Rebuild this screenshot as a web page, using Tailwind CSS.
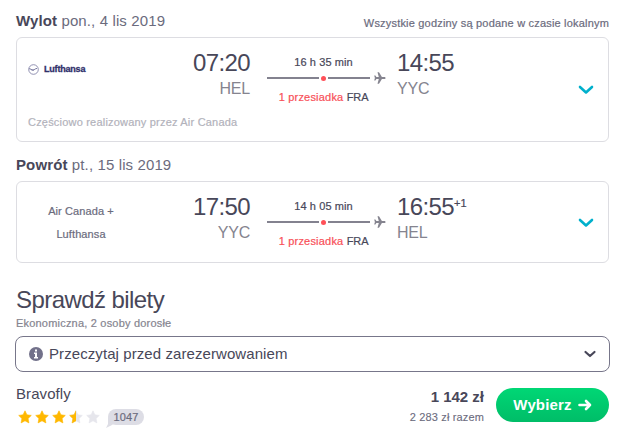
<!DOCTYPE html>
<html lang="pl">
<head>
    <meta charset="UTF-8">
    <meta name="viewport" content="width=device-width, initial-scale=1.0">
    <title>Sprawdź bilety</title>
    <script src="https://cdn.jsdelivr.net/npm/@tailwindcss/browser@4"></script>
</head>
<body class="bg-white font-['Liberation_Sans',Arial,sans-serif] text-[#484759] w-[632px] h-[437px] overflow-hidden">
    <svg class="hidden">
        <symbol id="plane" viewBox="0 0 12 12">
            <path d="M11.6 6c0-.7-.6-1.100-1.300-1.100H7.900L5 .3H3.500l1.300 4.600H2.400L1.400 3.600H.2L.9 6l-.7 2.400h1.200l1-1.300h2.400l-1.300 4.600H5l2.900-4.600h2.400c.7 0 1.300-.4 1.300-1.100z"/>
        </symbol>
        <symbol id="star" viewBox="0 0 14 14">
            <path d="M7 .8l1.9 4 4.4.6-3.2 3.1.8 4.4L7 10.8l-3.9 2.1.8-4.4L.7 5.4l4.4-.6z" stroke-width=".6" stroke-linejoin="round"/>
        </symbol>
    </svg>

    <main class="ml-4 w-[593px] pt-3">
        <!-- Outbound -->
        <div class="flex justify-between h-[18px]">
            <h2 class="text-[15px] leading-[18px] tracking-[0.12px] text-[#6b6b7d]"><b class="text-[#484759]">Wylot</b> pon., 4 lis 2019</h2>
            <p class="text-[11px] leading-[22px] tracking-[0.19px] text-[#6b6b7d] [-webkit-text-stroke:0.2px]">Wszystkie godziny są podane w czasie lokalnym</p>
        </div>
        <section class="mt-[7px] h-[105px] border border-[#dddde2] rounded-md flex">
            <div class="w-[163px] pl-[11px] pt-[23px]">
                <div class="flex items-center h-4 gap-[5px]">
                    <svg class="w-[11px] h-[11px]" viewBox="0 0 11 11" fill="none" stroke="#77779f">
                        <circle cx="5.5" cy="5.5" r="4.8" stroke-width=".8"/>
                        <path d="M1 4.7c2 .3 3 1.3 4.2 1.3S7 4.6 9 4.4M2.8 5.4c1.200.9 2.600 1.100 3.500.3" stroke-width="1"/>
                    </svg>
                    <span class="text-[9px] leading-4 font-bold tracking-[-0.2px] text-[#30306a] [-webkit-text-stroke:0.3px]">Lufthansa</span>
                </div>
                <p class="mt-[37px] text-[11px] leading-4 tracking-[0.2px] whitespace-nowrap text-[#b2b2bb] [-webkit-text-stroke:0.2px]">Częściowo realizowany przez Air Canada</p>
            </div>
            <div class="w-[70px] pt-[11px] text-right">
                <p class="text-2xl leading-7 tracking-[-0.6px]">07:20</p>
                <p class="text-base leading-6 tracking-[-0.2px] text-[#85848f]">HEL</p>
            </div>
            <div class="ml-[17px] w-[119px] pt-4">
                <p class="w-[113px] text-center text-[11px] leading-4 tracking-[0.08px] [-webkit-text-stroke:0.2px]">16 h 35 min</p>
                <div class="flex items-center h-4">
                    <i class="w-[52px] h-0.5 bg-[#83828f]"></i>
                    <i class="mx-0.5 size-[5px] rounded-full bg-[#ff5058]"></i>
                    <i class="w-[42px] h-0.5 bg-[#83828f]"></i>
                    <svg class="ml-1 size-3 fill-[#85848f]"><use href="#plane"/></svg>
                </div>
                <p class="mt-[3px] w-[113px] text-center text-[11px] leading-4 tracking-[0.2px] whitespace-nowrap [-webkit-text-stroke:0.2px]"><span class="text-[#f84f58]">1 przesiadka</span> <span class="tracking-[-0.1px]">FRA</span></p>
            </div>
            <div class="ml-[11px] pt-[11px]">
                <p class="text-2xl leading-7 tracking-[-0.6px]">14:55</p>
                <p class="text-base leading-6 tracking-[-0.2px] text-[#85848f]">YYC</p>
            </div>
            <svg class="ml-auto mr-[14px] self-center w-4 h-[10px]" viewBox="0 0 16 10" fill="none" stroke="#00b0cc" stroke-width="2.6" stroke-linecap="round" stroke-linejoin="round"><path d="M2 2l6 5.500 6-5.500"/></svg>
        </section>

        <!-- Return -->
        <h2 class="mt-[14px] text-[15px] leading-[18px] tracking-[0.12px] text-[#6b6b7d]"><b class="text-[#484759]">Powrót</b> pt., 15 lis 2019</h2>
        <section class="mt-[7px] h-[82px] border border-[#dddde2] rounded-md flex">
            <p class="w-[128px] mr-[35px] pt-[18px] text-center text-[11px] leading-[23px] tracking-[0.1px] text-[#6b6b7d] [-webkit-text-stroke:0.2px]">Air Canada +<br>Lufthansa</p>
            <div class="w-[70px] pt-[11px] text-right">
                <p class="text-2xl leading-7 tracking-[-0.6px]">17:50</p>
                <p class="text-base leading-6 tracking-[-0.2px] text-[#85848f]">YYC</p>
            </div>
            <div class="ml-[17px] w-[119px] pt-4">
                <p class="w-[113px] text-center text-[11px] leading-4 tracking-[0.08px] [-webkit-text-stroke:0.2px]">14 h 05 min</p>
                <div class="flex items-center h-4">
                    <i class="w-[52px] h-0.5 bg-[#83828f]"></i>
                    <i class="mx-0.5 size-[5px] rounded-full bg-[#ff5058]"></i>
                    <i class="w-[42px] h-0.5 bg-[#83828f]"></i>
                    <svg class="ml-1 size-3 fill-[#85848f]"><use href="#plane"/></svg>
                </div>
                <p class="mt-[3px] w-[113px] text-center text-[11px] leading-4 tracking-[0.2px] whitespace-nowrap [-webkit-text-stroke:0.2px]"><span class="text-[#f84f58]">1 przesiadka</span> <span class="tracking-[-0.1px]">FRA</span></p>
            </div>
            <div class="ml-[11px] pt-[11px]">
                <p class="flex text-2xl leading-7 tracking-[-0.6px]">16:55<span class="text-[11px] leading-5 tracking-normal [-webkit-text-stroke:0.2px]">+1</span></p>
                <p class="text-base leading-6 tracking-[-0.2px] text-[#85848f]">HEL</p>
            </div>
            <svg class="ml-auto mr-[14px] self-center w-4 h-[10px] mt-px" viewBox="0 0 16 10" fill="none" stroke="#00b0cc" stroke-width="2.6" stroke-linecap="round" stroke-linejoin="round"><path d="M2 2l6 5.500 6-5.500"/></svg>
        </section>

        <!-- Tickets -->
        <h1 class="mt-[23px] text-2xl leading-7 tracking-[-0.57px]">Sprawdź bilety</h1>
        <p class="mt-px text-[11px] leading-4 tracking-[0.2px] text-[#85848f] [-webkit-text-stroke:0.2px]">Ekonomiczna, 2 osoby dorosłe</p>
        <div class="mt-[5px] -mx-px h-9 border border-[#77768a] rounded-lg flex items-center pl-[13px] pr-[11px]">
            <svg class="size-[14px]" viewBox="0 0 14 14"><circle cx="7" cy="7" r="7" fill="#72718a"/><path d="M6 2.500h2v2H6zM5 5.600h3v4.400h1v1.400H5V10h1V7H5z" fill="#fff"/></svg>
            <span class="ml-[6px] text-[15px] leading-5 tracking-[0.08px]">Przeczytaj przed zarezerwowaniem</span>
            <svg class="ml-auto w-4 h-[10px]" viewBox="0 0 16 10" fill="none" stroke="#484759" stroke-width="2.200" stroke-linecap="round" stroke-linejoin="round"><path d="M3.500 3l4.500 4 4.500-4"/></svg>
        </div>
        <div class="mt-3 flex">
            <div>
                <p class="text-[15px] leading-5 tracking-[0.08px]">Bravofly</p>
                <div class="mt-1 flex items-center gap-[3px] pl-0.5 h-[18px]">
                    <svg class="size-[14px] fill-[#ffb800] stroke-[#ffb800]"><use href="#star"/></svg>
                    <svg class="size-[14px] fill-[#ffb800] stroke-[#ffb800]"><use href="#star"/></svg>
                    <svg class="size-[14px] fill-[#ffb800] stroke-[#ffb800]"><use href="#star"/></svg>
                    <svg class="size-[14px]" viewBox="0 0 14 14">
                        <use href="#star" width="14" height="14" class="fill-[#e6e6ec] stroke-[#e6e6ec]"/>
                        <svg width="7" height="14"><use href="#star" width="14" height="14" class="fill-[#ffb800] stroke-[#ffb800]"/></svg>
                    </svg>
                    <svg class="size-[14px] fill-[#e6e6ec] stroke-[#e6e6ec]"><use href="#star"/></svg>
                    <div class="relative ml-[5px] w-9 h-4 rounded-full bg-[#dddde5] text-center text-[11px] leading-4 tracking-[0.1px] text-[#6b6b7d] [-webkit-text-stroke:0.2px]">
                        <svg class="absolute left-[-2px] bottom-[-3px] w-[9px] h-[11px]" viewBox="0 0 9 11" fill="#dddde5"><path d="M2 0v7L0 11l6-3 3-3z"/></svg>
                        <span class="relative">1047</span>
                    </div>
                </div>
            </div>
            <div class="ml-auto mr-3 text-right pt-[3px]">
                <p class="text-[15px] leading-5 font-bold">1 142 zł</p>
                <p class="text-[11px] leading-5 tracking-[0.15px] text-[#6b6b7d] [-webkit-text-stroke:0.1px]">2 283 zł razem</p>
            </div>
            <button class="mt-1 w-[113px] h-[34px] rounded-full bg-linear-to-b from-[#00d775] to-[#00bd68] text-white text-[15px] tracking-[0.15px] font-bold flex items-center justify-center gap-[6px]">Wybierz
                <svg class="w-[14px] h-3" viewBox="0 0 14 12" fill="none" stroke="#fff" stroke-width="2.600" stroke-linecap="round" stroke-linejoin="round"><path d="M1.500 6h10.500M8 2L12 6 8 10"/></svg>
            </button>
        </div>
    </main>
</body>
</html>
